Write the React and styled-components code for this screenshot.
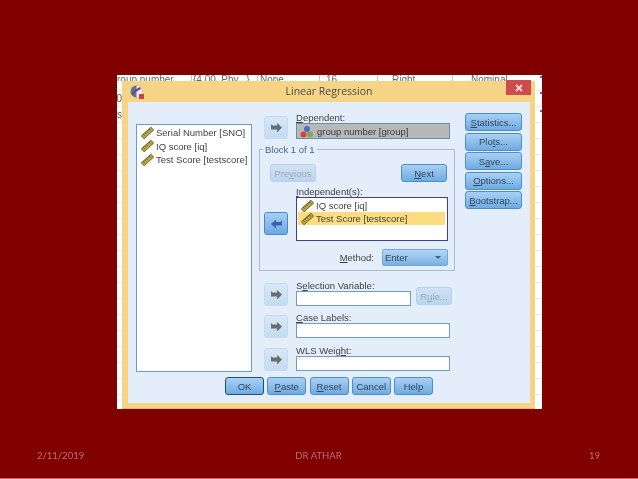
import React from "react";
import styled, { createGlobalStyle } from "styled-components";

const GlobalStyle = createGlobalStyle`
  html, body {
    margin: 0;
    padding: 0;
    background: #800000;
  }
  * {
    box-sizing: border-box;
  }
`;

const Page = styled.div`
  width: 638px;
  height: 479px;
  display: flex;
  flex-direction: column;
  background: #800000;
  border-bottom: 1px solid #c9646e;
  font-family: "Liberation Sans", Arial, sans-serif;
  overflow: hidden;
`;

const Shot = styled.div`
  position: relative;
  width: 425px;
  height: 334px;
  margin: 75px 0 0 117px;
  background-color: #fff;
  background-image: repeating-linear-gradient(to bottom, transparent 0, transparent 15px, #e8e8e8 15px, #e8e8e8 16px);
  filter: blur(0.45px);
`;

const Sheet = styled.div`
  display: flex;
  height: 6px;
  overflow: hidden;
  background: #fff;
`;

const SheetCell = styled.div`
  width: ${props => props.$width}px;
  padding-left: ${props => props.$pad || 0}px;
  flex: none;
  font-size: 10px;
  line-height: 9px;
  color: #666;
  white-space: nowrap;
  border-right: 1px solid #c8c8c8;

  &:last-child {
    border-right: 0;
  }
`;

const SheetBody = styled.div`
  display: flex;
`;

const SheetEdge = styled.div`
  width: 5px;
  height: 100px;
  padding-top: 10px;
  overflow: hidden;
  font-size: 10px;
  line-height: 16px;
  color: #555;
  direction: rtl;
  white-space: nowrap;
`;

const Dot = styled.span`
  position: absolute;
  right: 0;
  top: ${props => props.$top}px;
  width: 2px;
  height: 2px;
  background: #5a6ab0;
`;

const Dialog = styled.div`
  width: 413px;
  height: 327px;
  display: flex;
  flex-direction: column;
  padding: 0 5px 5px 6px;
  background: #f6d485;
  box-shadow: 0 1px 0 #d9b98a;
`;

const TitleBar = styled.div`
  height: 21px;
  flex: none;
  display: grid;
  grid-template-columns: 1fr auto 1fr;
  align-items: start;
`;

const TitleIcon = styled.svg`
  width: 14px;
  height: 14px;
  margin: 4px 0 0 2px;
  display: block;
`;

const Title = styled.div`
  font-family: "Open Sans", "Liberation Sans", sans-serif;
  font-size: 10.5px;
  line-height: 21px;
  color: #4a4a4a;
`;

const Close = styled.div`
  justify-self: end;
  width: 25px;
  height: 15px;
  margin: -1px -1px 0 0;
  display: flex;
  align-items: center;
  justify-content: center;
  background: #cf4b4d;
  color: #f7dcdc;
`;

const Client = styled.div`
  flex: 1;
  padding: 10px 0 0 8px;
  background: #e3eefa;
  border-top: 0;
`;

const Columns = styled.div`
  display: flex;
  align-items: flex-start;
`;

const SourceList = styled.div`
  width: 116px;
  height: 248px;
  margin-top: 12px;
  padding-top: 1px;
  background: #fff;
  border: 1px solid #6d9cc6;
`;

const VarRow = styled.div`
  height: ${props => props.$height || 13.5}px;
  display: flex;
  align-items: center;
  gap: 2px;
  padding-left: ${props => props.$pad || 4}px;
  font-size: 9.5px;
  color: #3f3f3f;
  white-space: nowrap;
  background: ${props => (props.$selected ? "#fbdd80" : "transparent")};
`;

const Middle = styled.div`
  width: 196px;
  margin-left: 7px;
`;

const FieldRow = styled.div`
  display: flex;
  align-items: flex-end;
  gap: 8px;
  padding-left: 5px;
  margin-top: ${props => props.$top || 0}px;
`;

const FieldColumn = styled.div`
  width: ${props => props.$width}px;
  flex: none;
`;

const Label = styled.div`
  height: 11px;
  font-size: 9.5px;
  line-height: 11px;
  color: #3f3f3f;
  white-space: nowrap;
`;

const Input = styled.div`
  height: ${props => props.$height || 15}px;
  display: flex;
  align-items: center;
  gap: 3px;
  padding-left: 3px;
  font-size: 9.5px;
  color: #3a3a3a;
  background: ${props => props.$fill || "#fff"};
  border: 1px solid ${props => props.$line || "#6d9cc6"};
`;

const SquareButton = styled.div`
  width: 24px;
  height: 23px;
  flex: none;
  display: flex;
  align-items: center;
  justify-content: center;
  border-radius: 3px;
  border: 1px solid ${props => (props.$active ? "#4a8ac4" : "#c4dbf1")};
  background: ${props =>
    props.$active ? "linear-gradient(#a8cff2, #6aa9e2)" : "linear-gradient(#d7e7f7, #c4dbf2)"};
  margin-bottom: ${props => props.$bottom || 0}px;
`;

const Block = styled.fieldset`
  width: 196px;
  height: 127px;
  margin: 5px 0 0;
  padding: 9px 7px 0 10px;
  border: 1px solid #a9bccc;
  min-width: 0;
`;

const BlockTitle = styled.legend`
  margin-left: -7px;
  padding: 0 2px;
  height: 11px;
  font-size: 9.5px;
  line-height: 11px;
  color: #4a5f94;
`;

const Paging = styled.div`
  display: flex;
  align-items: flex-start;
  justify-content: space-between;
`;

const Button = styled.div`
  width: ${props => props.$width || 46}px;
  height: 18px;
  flex: none;
  display: flex;
  align-items: center;
  justify-content: center;
  border-radius: 3px;
  font-size: 9.5px;
  white-space: nowrap;
  color: ${props => (props.$disabled ? "#9aa9b8" : "#33465a")};
  border: 1px solid ${props => (props.$disabled ? "#b7d1ea" : props.$primary ? "#1f4f78" : "#4f8fc8")};
  background: ${props =>
    props.$disabled ? "linear-gradient(#d0e2f4, #bcd5ee)" : "linear-gradient(#a9d0f3, #6fabe3)"};
`;

const Included = styled.div`
  display: flex;
  align-items: flex-end;
  gap: 8px;
  margin: 4px 0 0 -6px;
`;

const IncludedList = styled.div`
  width: 152px;
  height: 44px;
  padding: 1px 2px 0 1px;
  background: #fff;
  border: 1px solid #3f3f8c;
`;

const MethodRow = styled.div`
  display: flex;
  align-items: center;
  justify-content: flex-end;
  gap: 8px;
  margin: 8px -1px 0 0;
`;

const Select = styled.div`
  width: 66px;
  height: 17px;
  display: flex;
  align-items: center;
  justify-content: space-between;
  padding: 0 6px 0 2px;
  border-radius: 2px;
  font-size: 9.5px;
  color: #33465a;
  border: 1px solid #72a9dc;
  background: linear-gradient(#b5d6f4, #78b0e4);

  &::after {
    content: "";
    border: 3px solid transparent;
    border-top: 3px solid #4a5a6a;
    border-bottom: 0;
  }
`;

const RuleButton = styled(Button)`
  margin: 0 0 1px -3px;
`;

const Actions = styled.div`
  width: 57px;
  margin: 1px 0 0 10px;
  display: flex;
  flex-direction: column;
  gap: 1.5px;
`;

const Footer = styled.div`
  display: flex;
  gap: 3.25px;
  margin: 5px 0 0 89px;
`;

const SlideFooter = styled.div`
  margin-top: auto;
  padding: 0 38px 17px 37px;
  display: grid;
  grid-template-columns: 1fr auto 1fr;
  font-family: "Lato", "Open Sans", sans-serif;
  font-size: 9.5px;
  line-height: 10px;
  color: #b87070;
  filter: blur(0.25px);
`;

const SlideNumber = styled.div`
  justify-self: end;
`;

const Ruler = () => (
  <svg width="13" height="12" viewBox="0 0 13 12" style={{ flex: "none" }}>
    <g transform="rotate(-42 6.5 6)">
      <rect x="0" y="4" width="13" height="4" fill="#b8a648" stroke="#6a5c22" strokeWidth="0.8" />
      <path d="M2.5 4v2M4.5 4v1.5M6.5 4v2M8.5 4v1.5M10.5 4v2" stroke="#4c4218" strokeWidth="0.7" />
    </g>
  </svg>
);

const Nominal = () => (
  <svg width="14" height="13" viewBox="0 0 14 13" style={{ flex: "none" }}>
    <circle cx="7" cy="4" r="3" fill="#4a6fc0" />
    <circle cx="3.5" cy="9.5" r="3" fill="#d8423c" />
    <circle cx="10" cy="9.5" r="3" fill="#7cab52" />
  </svg>
);

const Arrow = ({ active }) => (
  <svg width="13" height="11" viewBox="0 0 13 11">
    {active ? (
      <path d="M1 6l5-4.5v2.6h4.5l1.5-2v5.4H6v3z" fill="#3f5fb4" />
    ) : (
      <path d="M12 5.5L7 1v2.6H2.5L1 2v5.4h6v3z" fill="#6a6e72" />
    )}
  </svg>
);

const sheetCells = [
  { width: 75, text: "roup number" },
  { width: 66, text: "{4.00, Phy...}", pad: 1 },
  { width: 62, text: "None", pad: 2 },
  { width: 58, text: "16", pad: 6 },
  { width: 75, text: "Right", pad: 14 },
  { width: 89, text: "Nominal", pad: 18 },
];

const sourceVariables = ["Serial Number [SNO]", "IQ score [iq]", "Test Score [testscore]"];
const includedVariables = ["IQ score [iq]", "Test Score [testscore]"];

const sideActions = [
  <><u>S</u>tatistics...</>,
  <>Plo<u>t</u>s...</>,
  <>S<u>a</u>ve...</>,
  <><u>O</u>ptions...</>,
  <><u>B</u>ootstrap...</>,
];

const bottomActions = [
  { key: "ok", label: "OK", primary: true },
  { key: "paste", label: <><u>P</u>aste</> },
  { key: "reset", label: <><u>R</u>eset</> },
  { key: "cancel", label: "Cancel" },
  { key: "help", label: "Help" },
];

export default function App() {
  return (
    <Page>
      <GlobalStyle />
      <Shot>
        <Sheet>
          {sheetCells.map(cell => (
            <SheetCell key={cell.text} $width={cell.width} $pad={cell.pad}>
              {cell.text}
            </SheetCell>
          ))}
        </Sheet>
        <Dot $top={1} />
        <Dot $top={17} />
        <Dot $top={35} />
        <SheetBody>
          <SheetEdge>
            <div>0</div>
            <div>es</div>
          </SheetEdge>
          <Dialog>
            <TitleBar>
              <TitleIcon viewBox="0 0 14 14">
                <circle cx="6.5" cy="6.5" r="6" fill="#3f7fa8" />
                <path d="M6.5.5a6 6 0 0 1 0 12z" fill="#e6eef4" />
                <path d="M2.5 9c2-3 4-4 8-6" stroke="#a8344a" strokeWidth="2" fill="none" />
                <rect x="9" y="9" width="5" height="5" fill="#d23c4a" />
              </TitleIcon>
              <Title>Linear Regression</Title>
              <Close>
                <svg width="8" height="8" viewBox="0 0 8 8">
                  <path d="M1 1l6 6M7 1L1 7" stroke="currentColor" strokeWidth="1.8" />
                </svg>
              </Close>
            </TitleBar>
            <Client>
              <Columns>
                <SourceList>
                  {sourceVariables.map(name => (
                    <VarRow key={name}>
                      <Ruler />
                      {name}
                    </VarRow>
                  ))}
                </SourceList>
                <Middle>
                  <FieldRow>
                    <SquareButton>
                      <Arrow />
                    </SquareButton>
                    <FieldColumn $width={154}>
                      <Label>
                        <u>D</u>ependent:
                      </Label>
                      <Input $height={16} $fill="#b8b8b8" $line="#5f90b8">
                        <Nominal />
                        group number [group]
                      </Input>
                    </FieldColumn>
                  </FieldRow>
                  <Block>
                    <BlockTitle>Block 1 of 1</BlockTitle>
                    <Paging>
                      <Button $disabled>
                        Pre<u>v</u>ious
                      </Button>
                      <Button>
                        <u>N</u>ext
                      </Button>
                    </Paging>
                    <Included>
                      <SquareButton $active $bottom={6}>
                        <Arrow active />
                      </SquareButton>
                      <FieldColumn $width={152}>
                        <Label>
                          <u>I</u>ndependent(s):
                        </Label>
                        <IncludedList>
                          {includedVariables.map((name, index) => (
                            <VarRow key={name} $height={13} $pad={3} $selected={index === 1}>
                              <Ruler />
                              {name}
                            </VarRow>
                          ))}
                        </IncludedList>
                      </FieldColumn>
                    </Included>
                    <MethodRow>
                      <Label>
                        <u>M</u>ethod:
                      </Label>
                      <Select>Enter</Select>
                    </MethodRow>
                  </Block>
                  <FieldRow $top={9}>
                    <SquareButton>
                      <Arrow />
                    </SquareButton>
                    <FieldColumn $width={115}>
                      <Label>
                        S<u>e</u>lection Variable:
                      </Label>
                      <Input />
                    </FieldColumn>
                    <RuleButton $disabled $width={36}>
                      R<u>u</u>le...
                    </RuleButton>
                  </FieldRow>
                  <FieldRow $top={6}>
                    <SquareButton>
                      <Arrow />
                    </SquareButton>
                    <FieldColumn $width={154}>
                      <Label>
                        <u>C</u>ase Labels:
                      </Label>
                      <Input />
                    </FieldColumn>
                  </FieldRow>
                  <FieldRow $top={7}>
                    <SquareButton>
                      <Arrow />
                    </SquareButton>
                    <FieldColumn $width={154}>
                      <Label>
                        WLS Weig<u>h</u>t:
                      </Label>
                      <Input />
                    </FieldColumn>
                  </FieldRow>
                </Middle>
                <Actions>
                  {sideActions.map((label, index) => (
                    <Button key={index} $width={57}>
                      {label}
                    </Button>
                  ))}
                </Actions>
              </Columns>
              <Footer>
                {bottomActions.map(action => (
                  <Button key={action.key} $width={39} $primary={action.primary}>
                    {action.label}
                  </Button>
                ))}
              </Footer>
            </Client>
          </Dialog>
        </SheetBody>
      </Shot>
      <SlideFooter>
        <div>2/11/2019</div>
        <div>DR ATHAR</div>
        <SlideNumber>19</SlideNumber>
      </SlideFooter>
    </Page>
  );
}
